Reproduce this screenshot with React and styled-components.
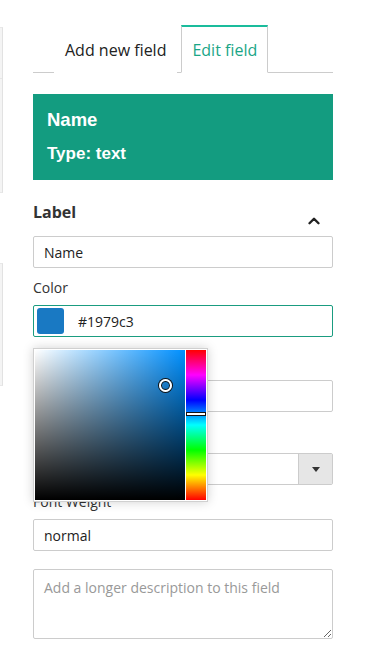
import React from 'react';
import styled, { createGlobalStyle } from 'styled-components';
import { ChevronUp } from 'lucide-react';

const GlobalStyle = createGlobalStyle`
    html, body {
        margin: 0;
        padding: 0;
        background: #fff;
    }

    body {
        font-family: "Open Sans", "Liberation Sans", sans-serif;
        color: #333;
    }

    * {
        box-sizing: border-box;
    }
`;

const App = () => {
    return (
        <>
            <GlobalStyle />
            <StyledPage>
                <LeftRail>
                    <RailBox $top={27} $height={166}>
                        <div className="rail-divider" />
                    </RailBox>
                    <RailBox $top={70} $height={123} />
                </LeftRail>

                <Main>
                    <TabList>
                        <Tab>Add new field</Tab>
                        <Tab $active>Edit field</Tab>
                    </TabList>

                    <FieldHeader>
                        <h2>Name</h2>
                        <p>Type: text</p>
                    </FieldHeader>

                    <SectionTitle>
                        <h3>Label</h3>
                        <ChevronUp size={18} strokeWidth={3.2} color="#222" />
                    </SectionTitle>

                    <TextInput defaultValue="Name" readOnly />

                    <Field $spacing={10}>
                        <FieldLabel>Color</FieldLabel>
                        <ColorWrap>
                            <ColorInput>
                                <span className="swatch" style={{ background: '#1979c3' }} />
                                <span>#1979c3</span>
                            </ColorInput>
                            <ColorPicker hue={206} sat={0.87} val={0.765} />
                        </ColorWrap>
                    </Field>

                    <Field $spacing={16}>
                        <FieldLabel>Size</FieldLabel>
                        <TextInput defaultValue="" readOnly />
                    </Field>

                    <Field $spacing={14}>
                        <FieldLabel>Font</FieldLabel>
                        <SelectBox>
                            <span className="value" />
                            <span className="select-btn" />
                        </SelectBox>
                    </Field>

                    <Field $spacing={7}>
                        <FieldLabel>Font Weight</FieldLabel>
                        <TextInput defaultValue="normal" readOnly />
                    </Field>

                    <Field $spacing={18}>
                        <TextArea placeholder="Add a longer description to this field" />
                    </Field>
                </Main>
            </StyledPage>
        </>
    );
};

const ColorPicker = ({ hue, sat, val }) => {
    return (
        <StyledPicker>
            <div className="saturation" style={{ background: `hsl(${hue}, 100%, 50%)` }}>
                <span
                    className="cursor"
                    style={{ left: `${sat * 100}%`, top: `${(1 - val) * 100}%` }}
                />
            </div>
            <div className="hue">
                <span className="hue-handle" style={{ top: `${((360 - hue) / 360) * 100}%` }} />
            </div>
        </StyledPicker>
    );
};

export default App;

const StyledPage = styled.div`
    display: flex;
    width: 365px;
    min-height: 659px;
`;

const LeftRail = styled.div`
    width: 3px;
    display: flex;
    flex-direction: column;
`;

const RailBox = styled.div`
    margin-top: ${(p) => p.$top}px;
    height: ${(p) => p.$height}px;
    background: #f4f4f4;
    border-top: 1px solid #e8e8e8;
    border-bottom: 1px solid #e8e8e8;
    border-right: 1px solid #e2e2e2;

    .rail-divider {
        margin-top: 50px;
        border-top: 1px solid #e6e6e6;
    }
`;

const Main = styled.div`
    width: 300px;
    margin-left: 30px;
    display: flex;
    flex-direction: column;
`;

const TabList = styled.div`
    display: flex;
    align-items: flex-end;
    margin-top: 25px;
    padding-left: 21px;
    border-bottom: 1px solid #ccc;
`;

const Tab = styled.div`
    height: 48px;
    margin-bottom: -1px;
    padding: 0 10px;
    display: flex;
    align-items: center;
    font-size: 16px;
    color: ${(p) => (p.$active ? '#1aa687' : '#222')};
    background: #fff;
    border: 1px solid ${(p) => (p.$active ? '#ccc' : 'transparent')};
    border-top: 2px solid ${(p) => (p.$active ? '#1abc9c' : 'transparent')};
    border-bottom-color: ${(p) => (p.$active ? '#fff' : 'transparent')};

    & + & {
        margin-left: 4px;
    }
`;

const FieldHeader = styled.div`
    margin-top: 21px;
    height: 86px;
    padding: 14px 14px;
    background: #139c80;
    color: #fff;
    font-family: "Liberation Sans", Arial, sans-serif;

    h2 {
        margin: 0;
        font-size: 18.5px;
        font-weight: 700;
        line-height: 24px;
    }

    p {
        margin: 11px 0 0;
        font-size: 17px;
        font-weight: 700;
        line-height: 22px;
    }
`;

const SectionTitle = styled.div`
    margin-top: 20px;
    display: flex;
    justify-content: space-between;
    align-items: flex-start;
    height: 36px;

    h3 {
        margin: 1px 0 0;
        font-size: 16px;
        font-weight: 700;
        line-height: 22px;
        color: #333;
    }

    svg {
        margin: 12px 10px 0 0;
    }
`;

const Field = styled.div`
    margin-top: ${(p) => p.$spacing}px;
`;

const FieldLabel = styled.div`
    font-size: 14px;
    line-height: 20px;
    margin-bottom: 7px;
    color: #333;
`;

const TextInput = styled.input`
    display: block;
    width: 100%;
    height: 32px;
    padding: 0 10px;
    border: 1px solid #ccc;
    border-radius: 2px;
    font-family: "Open Sans", sans-serif;
    font-size: 14px;
    color: #222;
    background: #fff;
    outline: none;
`;

const ColorWrap = styled.div`
    position: relative;
`;

const ColorInput = styled.div`
    display: flex;
    align-items: center;
    gap: 14px;
    height: 32px;
    padding: 0 3px;
    border: 1px solid #1a9c80;
    border-radius: 2px;
    font-size: 14px;
    color: #222;

    .swatch {
        width: 27px;
        height: 26px;
        border-radius: 3px;
    }
`;

const StyledPicker = styled.div`
    position: absolute;
    top: 43px;
    left: 0;
    z-index: 10;
    display: flex;
    gap: 1px;
    padding: 1px;
    background: #fff;
    border: 1px solid #d0d0d0;
    box-shadow: 0 0 10px rgba(0, 0, 0, 0.18);

    .saturation {
        position: relative;
        width: 150px;
        height: 150px;

        &::before,
        &::after {
            content: "";
            position: absolute;
            inset: 0;
        }

        &::before {
            background: linear-gradient(to right, #fff, rgba(255, 255, 255, 0));
        }

        &::after {
            background: linear-gradient(to top, #000, rgba(0, 0, 0, 0));
        }
    }

    .cursor {
        position: absolute;
        z-index: 2;
        width: 13px;
        height: 13px;
        margin: -6.5px 0 0 -6.5px;
        border-radius: 50%;
        border: 2px solid #fff;
        box-shadow: 0 0 0 1px #111, inset 0 0 0 1px #111;
    }

    .hue {
        position: relative;
        width: 20px;
        height: 150px;
        background: linear-gradient(
            to bottom,
            #ff0000 0%,
            #ff00ff 16.66%,
            #0000ff 33.33%,
            #00ffff 50%,
            #00ff00 66.66%,
            #ffff00 83.33%,
            #ff0000 100%
        );
    }

    .hue-handle {
        position: absolute;
        left: 0;
        right: 0;
        height: 4px;
        margin-top: -2px;
        background: #fff;
        border: 1px solid #111;
    }
`;

const SelectBox = styled.div`
    display: flex;
    height: 32px;
    border: 1px solid #ccc;
    border-radius: 2px;

    .value {
        flex: 1;
    }

    .select-btn {
        position: relative;
        width: 34px;
        background: #e6e6e6;
        border-left: 1px solid #ccc;

        &::after {
            content: "";
            position: absolute;
            top: 13px;
            left: 13px;
            border-left: 4px solid transparent;
            border-right: 4px solid transparent;
            border-top: 5px solid #333;
        }
    }
`;

const TextArea = styled.textarea`
    display: block;
    width: 100%;
    height: 70px;
    padding: 8px 10px;
    border: 1px solid #ccc;
    border-radius: 2px;
    font-family: "Open Sans", sans-serif;
    font-size: 14px;
    line-height: 20px;
    color: #222;
    outline: none;
    resize: vertical;

    &::placeholder {
        color: #999;
    }
`;
